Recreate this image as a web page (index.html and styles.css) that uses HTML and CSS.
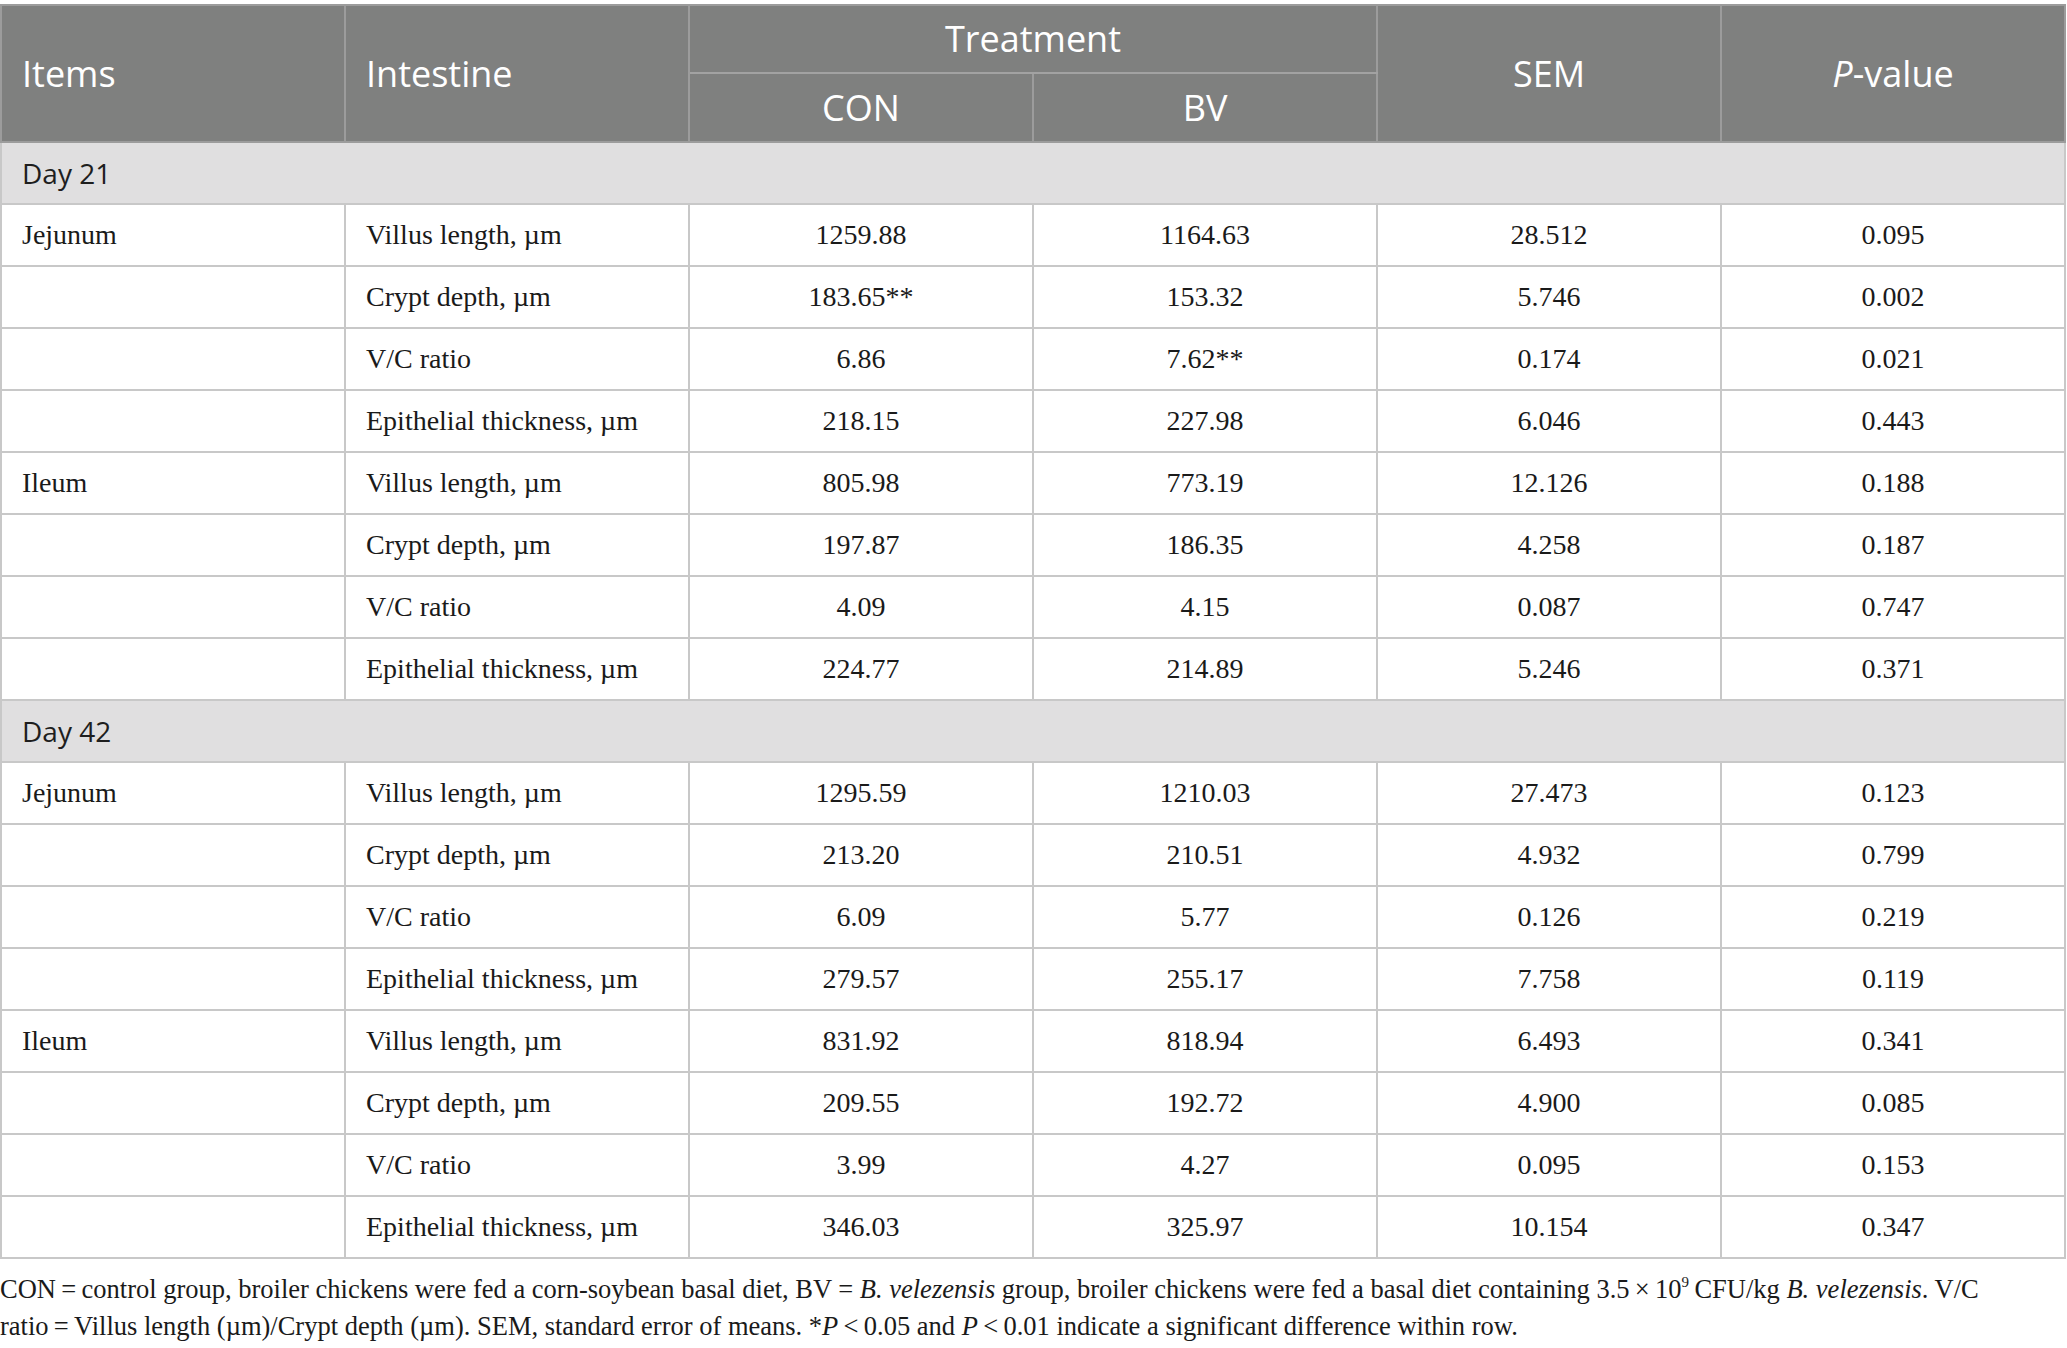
FILE: index.html
```html
<!DOCTYPE html>
<html lang="en">
<head>
<meta charset="utf-8">
<title>Table</title>
<link rel="stylesheet" href="styles.css">
</head>
<body>
<table class="data">
  <colgroup>
    <col class="c"><col class="c"><col class="c"><col class="c"><col class="c"><col class="c">
  </colgroup>
  <thead>
    <tr class="h1">
      <th rowspan="2" class="left">Items</th>
      <th rowspan="2" class="left">Intestine</th>
      <th colspan="2">Treatment</th>
      <th rowspan="2">SEM</th>
      <th rowspan="2"><i>P</i>-value</th>
    </tr>
    <tr class="h2">
      <th>CON</th>
      <th>BV</th>
    </tr>
  </thead>
  <tbody>
    <tr class="group"><td colspan="6">Day 21</td></tr>
    <tr><td class="left">Jejunum</td><td class="left">Villus length, µm</td><td>1259.88</td><td>1164.63</td><td>28.512</td><td>0.095</td></tr>
    <tr><td class="left"></td><td class="left">Crypt depth, µm</td><td>183.65**</td><td>153.32</td><td>5.746</td><td>0.002</td></tr>
    <tr><td class="left"></td><td class="left">V/C ratio</td><td>6.86</td><td>7.62**</td><td>0.174</td><td>0.021</td></tr>
    <tr><td class="left"></td><td class="left">Epithelial thickness, µm</td><td>218.15</td><td>227.98</td><td>6.046</td><td>0.443</td></tr>
    <tr><td class="left">Ileum</td><td class="left">Villus length, µm</td><td>805.98</td><td>773.19</td><td>12.126</td><td>0.188</td></tr>
    <tr><td class="left"></td><td class="left">Crypt depth, µm</td><td>197.87</td><td>186.35</td><td>4.258</td><td>0.187</td></tr>
    <tr><td class="left"></td><td class="left">V/C ratio</td><td>4.09</td><td>4.15</td><td>0.087</td><td>0.747</td></tr>
    <tr><td class="left"></td><td class="left">Epithelial thickness, µm</td><td>224.77</td><td>214.89</td><td>5.246</td><td>0.371</td></tr>
    <tr class="group"><td colspan="6">Day 42</td></tr>
    <tr><td class="left">Jejunum</td><td class="left">Villus length, µm</td><td>1295.59</td><td>1210.03</td><td>27.473</td><td>0.123</td></tr>
    <tr><td class="left"></td><td class="left">Crypt depth, µm</td><td>213.20</td><td>210.51</td><td>4.932</td><td>0.799</td></tr>
    <tr><td class="left"></td><td class="left">V/C ratio</td><td>6.09</td><td>5.77</td><td>0.126</td><td>0.219</td></tr>
    <tr><td class="left"></td><td class="left">Epithelial thickness, µm</td><td>279.57</td><td>255.17</td><td>7.758</td><td>0.119</td></tr>
    <tr><td class="left">Ileum</td><td class="left">Villus length, µm</td><td>831.92</td><td>818.94</td><td>6.493</td><td>0.341</td></tr>
    <tr><td class="left"></td><td class="left">Crypt depth, µm</td><td>209.55</td><td>192.72</td><td>4.900</td><td>0.085</td></tr>
    <tr><td class="left"></td><td class="left">V/C ratio</td><td>3.99</td><td>4.27</td><td>0.095</td><td>0.153</td></tr>
    <tr><td class="left"></td><td class="left">Epithelial thickness, µm</td><td>346.03</td><td>325.97</td><td>10.154</td><td>0.347</td></tr>
  </tbody>
</table>
<p class="note">CON&#8201;=&#8201;control group, broiler chickens were fed a corn-soybean basal diet, BV = <i>B. velezensis</i> group, broiler chickens were fed a basal diet containing 3.5&#8201;×&#8201;10<sup>9</sup>&#8201;CFU/kg <i>B. velezensis</i>. V/C<br>ratio&#8201;=&#8201;Villus length (µm)/Crypt depth (µm). SEM, standard error of means. *<i>P</i>&#8201;&lt;&#8201;0.05 and <i>P</i>&#8201;&lt;&#8201;0.01 indicate a significant difference within row.</p>
</body>
</html>
```

FILE: styles.css
```css
html, body {
  margin: 0;
  padding: 0;
  background: #ffffff;
}

body {
  padding-top: 4px;
  font-family: "Liberation Serif", "Times New Roman", serif;
  color: #1a1a1a;
}

.data {
  width: 2066px;
  table-layout: fixed;
  border-collapse: collapse;
  border: 2px solid #c4c4c4;
}

.data .c {
  width: 344px;
}

.data th {
  background: #7f807f;
  color: #ffffff;
  font-family: "Open Sans", "Noto Sans", sans-serif;
  font-weight: 400;
  font-size: 36px;
  text-align: center;
  vertical-align: middle;
  border: 2px solid #9c9c9c;
  padding: 0 20px;
  line-height: 1.1;
}

.data .h1 th[colspan] {
  border-bottom-color: #a2a2a2;
}

.data .h1 {
  height: 68px;
}

.data .h2 {
  height: 69px;
}

.data th.left {
  text-align: left;
}

.data td {
  height: 60px;
  padding: 0 20px;
  border: 2px solid #c8c8c8;
  font-size: 28px;
  text-align: center;
  vertical-align: middle;
  line-height: 1;
}

.data td.left {
  text-align: left;
}

.data .group td {
  background: #e0dfe0;
  font-family: "Open Sans", "Noto Sans", sans-serif;
  font-size: 28px;
  text-align: left;
  color: #1e1e1e;
}

.note {
  margin: 12px 0 0 0;
  font-size: 26.5px;
  line-height: 37px;
  color: #1a1a1a;
}

.note sup {
  font-size: 15px;
  line-height: 0;
  vertical-align: 11px;
}
```
